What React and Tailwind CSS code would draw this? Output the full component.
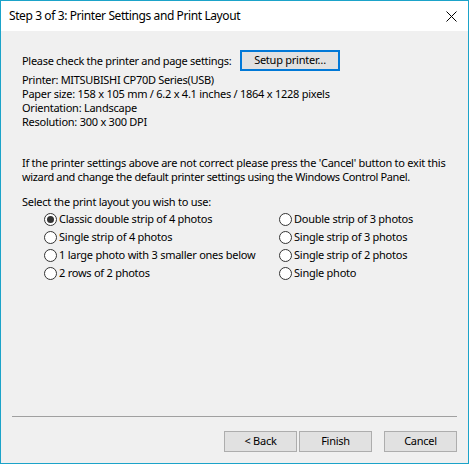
import React from "react";

function Radio({ checked, label }) {
  return (
    <div className="flex items-center h-[18px]">
      <span className="w-[13px] h-[13px] rounded-full border border-[#333333] bg-white flex items-center justify-center shrink-0">
        {checked && <span className="w-[7px] h-[7px] rounded-full bg-[#333333]" />}
      </span>
      <span className="ml-[2px] whitespace-nowrap">{label}</span>
    </div>
  );
}

function Btn({ children, focus }) {
  return (
    <button
      className={
        "h-[21px] flex items-center justify-center bg-[#e1e1e1] text-black whitespace-nowrap " +
        (focus ? "w-[100px] border-2 border-[#0078d7]" : "w-[73px] border border-[#adadad]")
      }
    >
      {children}
    </button>
  );
}

export default function App() {
  const font = { fontFamily: '"Noto Sans", "Open Sans", sans-serif' };
  return (
    <div
      className="w-[469px] h-[464px] border border-[#1ba3c9] flex flex-col text-[11px] tracking-[-0.25px] text-black bg-[#f0f0f0]"
      style={font}
    >
      <div className="h-[30px] bg-white flex items-center justify-between pl-[8px] pr-[10px] shrink-0">
        <span className="text-[12px] tracking-[-0.4px]">Step 3 of 3: Printer Settings and Print Layout</span>
        <svg width="11" height="11" viewBox="0 0 11 11" className="mr-[1px]">
          <path d="M0.5 0.5 L10.5 10.5 M10.5 0.5 L0.5 10.5" stroke="#000" strokeWidth="1" fill="none" />
        </svg>
      </div>
      <div className="flex-1 flex flex-col pl-[21px] pr-[11px] pt-[19px]">
        <div className="flex items-center">
          <span className="w-[218px] leading-[14px] whitespace-nowrap tracking-[-0.3px]">Please check the printer and page settings:</span>
          <Btn focus>Setup printer…</Btn>
        </div>
        <div className="mt-[2px] leading-[14px] whitespace-nowrap">
          <div className="tracking-[-0.3px]">Printer: MITSUBISHI CP70D Series(USB)</div>
          <div className="tracking-[-0.25px]">Paper size: 158 x 105 mm / 6.2 x 4.1 inches / 1864 x 1228 pixels</div>
          <div>Orientation: Landscape</div>
          <div>Resolution: 300 x 300 DPI</div>
        </div>
        <div className="mt-[27px] leading-[14px] whitespace-nowrap">
          <div>If the printer settings above are not correct please press the 'Cancel' button to exit this</div>
          <div className="tracking-[-0.35px]">wizard and change the default printer settings using the Windows Control Panel.</div>
        </div>
        <div className="mt-[11px] leading-[14px]">Select the print layout you wish to use:</div>
        <div className="flex pl-[22px] mt-[1px]">
          <div className="w-[235px] flex flex-col">
            <Radio checked label="Classic double strip of 4 photos" />
            <Radio label="Single strip of 4 photos" />
            <Radio label="1 large photo with 3 smaller ones below" />
            <Radio label="2 rows of 2 photos" />
          </div>
          <div className="flex flex-col">
            <Radio label="Double strip of 3 photos" />
            <Radio label="Single strip of 3 photos" />
            <Radio label="Single strip of 2 photos" />
            <Radio label="Single photo" />
          </div>
        </div>
        <div className="flex-1" />
        <div className="h-px bg-[#a0a0a0] ml-[-10px]" />
        <div className="flex justify-end mt-[14px] mb-[11px]">
          <Btn>&lt; Back</Btn>
          <div className="w-[2px]" />
          <Btn>Finish</Btn>
          <div className="w-[12px]" />
          <Btn>Cancel</Btn>
        </div>
      </div>
    </div>
  );
}
